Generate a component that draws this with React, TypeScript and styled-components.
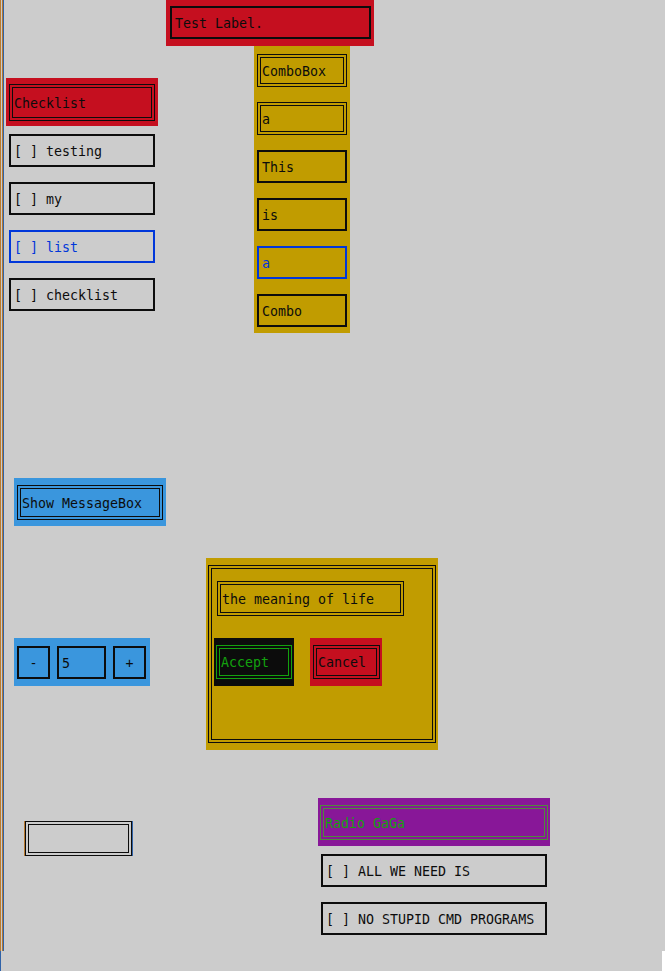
import React from 'react'
import styled, { createGlobalStyle } from 'styled-components'

// campbell-ish terminal palette
const C = {
    paper: '#cccccc',
    red: '#c50f1f',
    yellow: '#c19c00',
    cyan: '#3a96dd',
    purple: '#881798',
    black: '#0c0c0c',
    green: '#13a10e',
    blue: '#0037da',
    ink: '#0c0c0c',
    amber: '#b87a30',
    steel: '#2f62a8',
}

const GlobalStyle = createGlobalStyle`
    html, body {
        margin: 0;
        padding: 0;
        background: ${C.paper};
    }
    body {
        width: 665px;
        font-family: "DejaVu Sans Mono", "Liberation Mono", monospace;
        font-size: 13.3px;
        line-height: 1;
    }
`

const Screen = styled.div`
    position: relative;
    width: 662px;
    height: 951px;
    background: ${C.paper};
    box-shadow:
        inset 1px 0 0 ${C.amber},
        inset 2px 0 0 ${C.paper},
        inset 3px 0 0 ${C.amber},
        inset 4px 0 0 ${C.steel};
`

const Footer = styled.div`
    display: flex;
    height: 20px;
    width: 665px;

    &::before {
        content: "";
        width: 1px;
        background: ${C.steel};
    }
    &::after {
        content: "";
        width: 3px;
        margin-left: auto;
        background: #ffffff;
    }
`

const Placed = styled.div<{ $x: number; $y: number }>`
    position: absolute;
    left: ${p => p.$x}px;
    top: ${p => p.$y}px;
    display: flex;
    flex-direction: column;
`

const Block = styled.div<{ $bg: string; $w: number; $h: number; $pad: string; $row?: boolean; $gap?: number }>`
    box-sizing: border-box;
    width: ${p => p.$w}px;
    height: ${p => p.$h}px;
    background: ${p => p.$bg};
    padding: ${p => p.$pad};
    display: flex;
    flex-direction: ${p => p.$row ? 'row' : 'column'};
    gap: ${p => p.$gap ?? 0}px;
`

const Frame = styled.div<{
    $w: number
    $h: number
    $double?: boolean
    $line?: string
    $ink?: string
    $center?: boolean
    $fringe?: boolean
}>`
    box-sizing: border-box;
    flex: none;
    width: ${p => p.$w}px;
    height: ${p => p.$h}px;
    display: flex;
    align-items: center;
    justify-content: ${p => p.$center ? 'center' : 'flex-start'};
    border: ${p => p.$double ? '4px double' : '2px solid'} ${p => p.$line ?? C.black};
    padding-left: ${p => p.$center ? 0 : p.$double ? 1 : 3}px;
    padding-top: 2px;
    color: ${p => p.$ink ?? C.ink};
    white-space: pre;
    ${p => p.$fringe && `box-shadow: -1px 0 0 ${C.amber}, 1px 0 0 ${C.steel};`}
`

const Stack = styled.div<{ $top: number; $indent: number }>`
    display: flex;
    flex-direction: column;
    gap: 15px;
    margin-top: ${p => p.$top}px;
    padding-left: ${p => p.$indent}px;
`

const DialogFrame = styled.div`
    box-sizing: border-box;
    width: 228px;
    height: 178px;
    border: 4px double ${C.black};
    padding: 12px 0 0 2px;
    display: flex;
    flex-direction: column;
`

const ButtonRow = styled.div`
    display: flex;
    gap: 16px;
    margin-top: 22px;
`

const checklist = ['testing', 'my', 'list', 'checklist']
const combo = ['This', 'is', 'a', 'Combo']
const radios = ['ALL WE NEED IS', 'NO STUPID CMD PROGRAMS']

export default function App() {
    return (
        <>
            <GlobalStyle />
            <Screen>
                <Placed $x={166} $y={0}>
                    <Block $bg={C.red} $w={208} $h={46} $pad="6px 3px 0 4px">
                        <Frame $w={201} $h={33}>Test Label.</Frame>
                    </Block>
                </Placed>

                <Placed $x={6} $y={78}>
                    <Block $bg={C.red} $w={152} $h={48} $pad="6px 3px 5px 3px">
                        <Frame $w={146} $h={37} $double>Checklist</Frame>
                    </Block>
                    <Stack $top={8} $indent={3}>
                        {checklist.map(item => (
                            <Frame
                                key={item}
                                $w={146}
                                $h={33}
                                $line={item === 'list' ? C.blue : C.black}
                                $ink={item === 'list' ? C.blue : C.ink}
                            >
                                {'[ ] ' + item}
                            </Frame>
                        ))}
                    </Stack>
                </Placed>

                <Placed $x={254} $y={46}>
                    <Block $bg={C.yellow} $w={96} $h={287} $pad="8px 3px 6px 3px" $gap={15}>
                        <Frame $w={90} $h={33} $double>ComboBox</Frame>
                        <Frame $w={90} $h={33} $double>a</Frame>
                        {combo.map((word, i) => (
                            <Frame
                                key={i}
                                $w={90}
                                $h={33}
                                $line={i === 2 ? C.blue : C.black}
                                $ink={i === 2 ? C.blue : C.ink}
                            >
                                {word}
                            </Frame>
                        ))}
                    </Block>
                </Placed>

                <Placed $x={14} $y={478}>
                    <Block $bg={C.cyan} $w={152} $h={48} $pad="7px 3px">
                        <Frame $w={146} $h={35} $double>Show MessageBox</Frame>
                    </Block>
                </Placed>

                <Placed $x={14} $y={638}>
                    <Block $bg={C.cyan} $w={136} $h={48} $pad="8px 3px" $row $gap={7}>
                        <Frame $w={33} $h={33} $center>-</Frame>
                        <Frame $w={49} $h={33}>5</Frame>
                        <Frame $w={33} $h={33} $center>+</Frame>
                    </Block>
                </Placed>

                <Placed $x={206} $y={558}>
                    <Block $bg={C.yellow} $w={232} $h={192} $pad="7px 2px">
                        <DialogFrame>
                            <Frame $w={187} $h={35} $double style={{ marginLeft: 3 }}>the meaning of life</Frame>
                            <ButtonRow>
                                <Block $bg={C.black} $w={80} $h={48} $pad="7px 2px">
                                    <Frame $w={76} $h={34} $double $line={C.green} $ink={C.green}>Accept</Frame>
                                </Block>
                                <Block $bg={C.red} $w={72} $h={48} $pad="7px 2px 7px 3px">
                                    <Frame $w={67} $h={34} $double>Cancel</Frame>
                                </Block>
                            </ButtonRow>
                        </DialogFrame>
                    </Block>
                </Placed>

                <Placed $x={25} $y={821}>
                    <Frame $w={107} $h={35} $double $fringe />
                </Placed>

                <Placed $x={318} $y={798}>
                    <Block $bg={C.purple} $w={232} $h={48} $pad="7px 2px 6px 2px">
                        <Frame $w={228} $h={35} $double $line="#4f8a3c" $ink={C.green}>Radio GaGa</Frame>
                    </Block>
                    <Stack $top={8} $indent={3}>
                        {radios.map(item => (
                            <Frame key={item} $w={226} $h={33}>{'[ ] ' + item}</Frame>
                        ))}
                    </Stack>
                </Placed>
            </Screen>
            <Footer />
        </>
    )
}
